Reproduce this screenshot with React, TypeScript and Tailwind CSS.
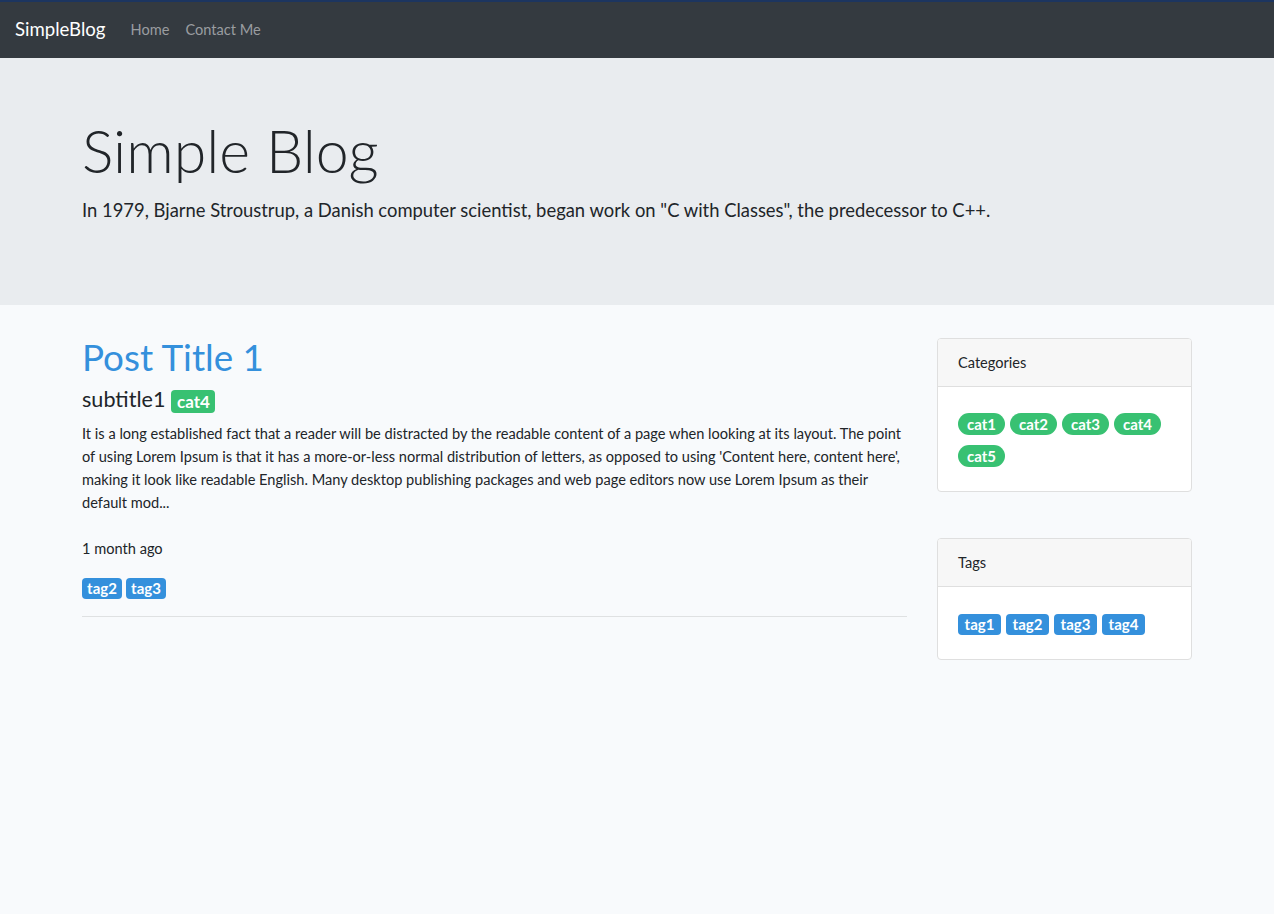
import React from "react";

const font = "font-['Lato','Liberation_Sans',sans-serif]";

function CatPill({ label }: { label: string }) {
  return (
    <span className="inline-flex h-[22px] w-[47px] items-center justify-center rounded-full bg-[#38c172] text-[15px] font-bold leading-none text-white">
      {label}
    </span>
  );
}

function TagBadge({ label, w = "w-[43px]" }: { label: string; w?: string }) {
  return (
    <span
      className={`inline-flex h-[21px] ${w} items-center justify-center rounded-[4px] bg-[#3490dc] text-[15px] font-bold leading-none text-white`}
    >
      {label}
    </span>
  );
}

function Card({
  title,
  bodyClass,
  children,
}: {
  title: string;
  bodyClass: string;
  children: React.ReactNode;
}) {
  return (
    <div className="overflow-hidden rounded-[4px] border border-[#dfdfdf] bg-white">
      <div className="flex h-[48px] items-center border-b border-[#dfdfdf] bg-[#f7f7f7] px-5 text-[14.6px] text-[#212529]">
        {title}
      </div>
      <div className={`flex flex-wrap gap-x-[5px] gap-y-[10px] px-5 ${bodyClass}`}>{children}</div>
    </div>
  );
}

export default function App() {
  return (
    <div className={`min-h-screen bg-[#f8fafc] text-[#212529] ${font}`}>
      {/* Navbar */}
      <nav className="flex h-[58px] items-center border-t-2 border-[#1c3560] bg-[#343a40] px-[15px]">
        <span className="text-[18.6px] text-white">SimpleBlog</span>
        <div className="ml-[25px] flex items-center gap-[16px] text-[14.6px] text-[#9a9da0]">
          <span>Home</span>
          <span>Contact Me</span>
        </div>
      </nav>

      {/* Jumbotron */}
      <header className="h-[247px] bg-[#e9ecef] pt-[58px]">
        <div className="mx-auto w-[1110px]">
          <h1 className="text-[59px] font-light leading-[70px]">Simple Blog</h1>
          <p className="mt-[10px] text-[18.4px] leading-[29px]">
            In 1979, Bjarne Stroustrup, a Danish computer scientist, began work on "C with Classes", the predecessor to C++.
          </p>
        </div>
      </header>

      {/* Content */}
      <main className="mx-auto flex w-[1110px] gap-[30px]">
        <section className="w-[825px] pt-[31px]">
          <h2 className="text-[36.8px] leading-[43px] text-[#3490dc]">Post Title 1</h2>
          <div className="mt-[7px] flex h-[26px] items-center gap-[6px]">
            <span className="text-[21.6px] leading-[26px]">subtitle1</span>
            <span className="mt-[4px] inline-flex h-[23px] w-[44px] items-center justify-center rounded-[4px] bg-[#38c172] text-[17px] font-bold leading-none text-white">
              cat4
            </span>
          </div>
          <p className="mt-[10px] text-[14.6px] leading-[23px]">
            It is a long established fact that a reader will be distracted by the readable content of a page when looking at its layout. The point of using Lorem Ipsum is that it has a more-or-less normal distribution of letters, as opposed to using 'Content here, content here', making it look like readable English. Many desktop publishing packages and web page editors now use Lorem Ipsum as their default mod...
          </p>
          <p className="mt-[23px] text-[14.6px] leading-[23px]">1 month ago</p>
          <div className="mt-[18px] flex gap-[4px]">
            <TagBadge label="tag2" w="w-[40px]" />
            <TagBadge label="tag3" w="w-[40px]" />
          </div>
          <hr className="mt-[17px] border-0 border-t border-[#dfe1e2]" />
        </section>

        <aside className="w-[255px] pt-[33px]">
          <Card title="Categories" bodyClass="pt-[26px] pb-[24px]">
            <CatPill label="cat1" />
            <CatPill label="cat2" />
            <CatPill label="cat3" />
            <CatPill label="cat4" />
            <CatPill label="cat5" />
          </Card>
          <div className="mt-[46px]">
            <Card title="Tags" bodyClass="pt-[27px] pb-[24px]">
              <TagBadge label="tag1" />
              <TagBadge label="tag2" />
              <TagBadge label="tag3" />
              <TagBadge label="tag4" />
            </Card>
          </div>
        </aside>
      </main>
    </div>
  );
}
